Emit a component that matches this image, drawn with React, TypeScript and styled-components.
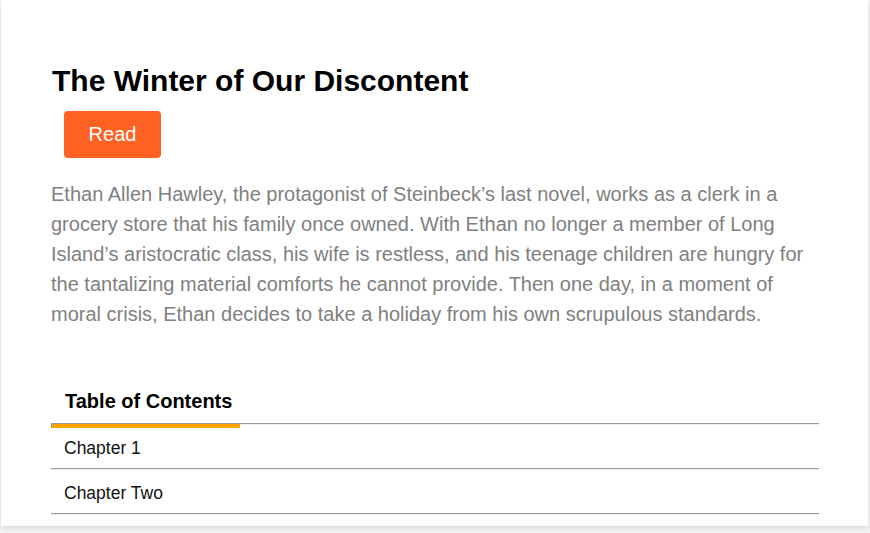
import React from "react";
import styled, { createGlobalStyle } from "styled-components";

const Global = createGlobalStyle`
  html, body { margin: 0; padding: 0; background: #ffffff; }
  body { font-family: "Liberation Sans", Arial, sans-serif; }
`;

const Page = styled.div`
  padding: 0 2px 7px 1px;
  background: #f4f4f4;
`;

const Card = styled.article`
  background: #ffffff;
  box-shadow: 0 2px 6px rgba(0, 0, 0, 0.12);
  padding: 64px 49px 11px 50px;
  display: flex;
  flex-direction: column;
`;

const Title = styled.h1`
  margin: 0 0 0 1px;
  font-size: 30px;
  line-height: 34px;
  font-weight: 700;
  color: #000;
`;

const ReadButton = styled.button`
  align-self: flex-start;
  margin: 13px 0 0 13px;
  width: 97px;
  height: 47px;
  border: none;
  border-radius: 4px;
  background: #ff6123;
  color: #fff;
  font-family: inherit;
  font-size: 20px;
`;

const Synopsis = styled.p`
  margin: 21px 0 0 0;
  font-size: 20px;
  line-height: 30px;
  color: #808080;
`;

const Tabs = styled.div`
  margin-top: 60px;
  display: flex;
  border-bottom: 1px solid #9a9a9a;
`;

const Tab = styled.div<{ $active?: boolean }>`
  position: relative;
  width: 189px;
  box-sizing: border-box;
  padding: 0 0 10px 14px;
  font-size: 20px;
  line-height: 24px;
  font-weight: 700;
  color: #000;
  &::after {
    content: "";
    display: ${(p) => (p.$active ? "block" : "none")};
    position: absolute;
    left: 0;
    right: 0;
    bottom: -5px;
    height: 4px;
    background: #ffa600;
    border-left: 1px solid #9a9a9a;
  }
`;

const ChapterList = styled.ul`
  list-style: none;
  margin: 0;
  padding: 0;
  border-top: 1px solid #eeeeee;
`;

const Chapter = styled.li`
  padding: 3px 0 0 13px;
  height: 40px;
  display: flex;
  align-items: center;
  font-size: 17.5px;
  color: #111;
  border-bottom: 1px solid #9a9a9a;
  box-shadow: 0 1px 0 #eeeeee;
  margin-bottom: 1px;
`;

export default function App() {
  return (
    <>
      <Global />
      <Page>
        <Card>
          <Title>The Winter of Our Discontent</Title>
          <ReadButton>Read</ReadButton>
          <Synopsis>
            Ethan Allen Hawley, the protagonist of Steinbeck’s last novel, works as a clerk in a
            grocery store that his family once owned. With Ethan no longer a member of Long
            Island’s aristocratic class, his wife is restless, and his teenage children are hungry
            for the tantalizing material comforts he cannot provide. Then one day, in a moment of
            moral crisis, Ethan decides to take a holiday from his own scrupulous standards.
          </Synopsis>
          <Tabs>
            <Tab $active>Table of Contents</Tab>
          </Tabs>
          <ChapterList>
            <Chapter>Chapter 1</Chapter>
            <Chapter>Chapter Two</Chapter>
          </ChapterList>
        </Card>
      </Page>
    </>
  );
}
